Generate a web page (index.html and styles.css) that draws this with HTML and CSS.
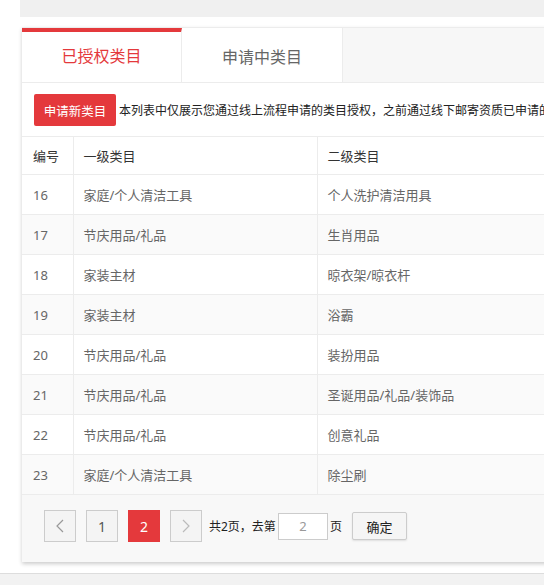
FILE: index.html
```html
<!DOCTYPE html>
<html lang="zh-CN">
<head>
<meta charset="utf-8">
<title>类目授权</title>
<link rel="stylesheet" href="styles.css">
</head>
<body>
<div class="topbar"></div>
<div class="card">
  <div class="tabs">
    <div class="tab active">已授权类目</div>
    <div class="tab">申请中类目</div>
  </div>
  <div class="toolbar">
    <button class="btn-red">申请新类目</button>
    <span class="notice">本列表中仅展示您通过线上流程申请的类目授权，之前通过线下邮寄资质已申请的</span>
  </div>
  <table class="grid">
    <colgroup><col class="c1"><col class="c2"><col class="c3"></colgroup>
    <thead>
      <tr><th>编号</th><th>一级类目</th><th>二级类目</th></tr>
    </thead>
    <tbody>
      <tr><td>16</td><td>家庭/个人清洁工具</td><td>个人洗护清洁用具</td></tr>
      <tr><td>17</td><td>节庆用品/礼品</td><td>生肖用品</td></tr>
      <tr><td>18</td><td>家装主材</td><td>晾衣架/晾衣杆</td></tr>
      <tr><td>19</td><td>家装主材</td><td>浴霸</td></tr>
      <tr><td>20</td><td>节庆用品/礼品</td><td>装扮用品</td></tr>
      <tr><td>21</td><td>节庆用品/礼品</td><td>圣诞用品/礼品/装饰品</td></tr>
      <tr><td>22</td><td>节庆用品/礼品</td><td>创意礼品</td></tr>
      <tr><td>23</td><td>家庭/个人清洁工具</td><td>除尘刷</td></tr>
    </tbody>
  </table>
  <div class="pager">
    <span class="pg arrow"><svg width="8" height="14" viewBox="0 0 8 14"><polyline points="7,1 1,7 7,13" fill="none" stroke="#999" stroke-width="1.2"/></svg></span>
    <span class="pg">1</span>
    <span class="pg current">2</span>
    <span class="pg arrow"><svg width="8" height="14" viewBox="0 0 8 14"><polyline points="1,1 7,7 1,13" fill="none" stroke="#bbb" stroke-width="1.2"/></svg></span>
    <span class="pg-text">共2页，去第</span>
    <span class="pg-input">2</span>
    <span class="pg-text unit">页</span>
    <button class="pg-ok">确定</button>
  </div>
</div>
<div class="footer"></div>
</body>
</html>
```

FILE: styles.css
```css
html, body {
  margin: 0;
  padding: 0;
  overflow: hidden;
  background: #fff;
  font-family: "Noto Sans", "Noto Sans CJK SC", sans-serif;
  color: #333;
}

.topbar {
  margin-left: 20px;
  height: 17px;
  background: #f0f0f0;
}

.card {
  margin: 10px 0 0 22px;
  width: 900px;
  background: #fff;
  box-shadow: 0 2px 4px rgba(0, 0, 0, 0.2);
}

.tabs {
  display: flex;
  height: 54px;
  background: #f7f7f7;
  border-top: 1px solid #ececec;
  border-bottom: 1px solid #ececec;
}

.tab {
  width: 160px;
  height: 54px;
  box-sizing: border-box;
  background: #fff;
  display: flex;
  align-items: center;
  justify-content: center;
  font-size: 16px;
  color: #666;
  border-right: 1px solid #ececec;
}

.tab.active {
  color: #e4393c;
  border-top: 4px solid #e4393c;
  padding-bottom: 4px;
}

.tab + .tab {
  width: 161px;
  padding-top: 2px;
}

.toolbar {
  display: flex;
  align-items: center;
  padding: 11px 12px 10px;
  white-space: nowrap;
  gap: 3px;
}

.btn-red {
  height: 32px;
  width: 82px;
  padding: 0;
  border: none;
  border-radius: 2px;
  background: #e4393c;
  color: #fff;
  font-family: inherit;
  font-size: 12.5px;
}

.notice {
  font-size: 12px;
  color: #222;
}

.grid {
  width: 100%;
  border-collapse: collapse;
  font-size: 13px;
}

.grid col.c1 { width: 51px; }
.grid col.c2 { width: 244px; }

.grid th,
.grid td {
  text-align: left;
  border: 1px solid #ececec;
  padding: 0 0 0 10px;
  font-weight: normal;
}

.grid th:first-child,
.grid td:first-child {
  border-left: none;
  padding-left: 11px;
}

.grid th {
  height: 37px;
  color: #333;
}

.grid td {
  height: 39px;
  color: #666;
}

.grid tbody tr:nth-child(even) td {
  background: #fafafa;
}

.pager {
  display: flex;
  align-items: center;
  background: #f8f8f8;
  padding: 15px 22px 20px;
  font-size: 12px;
}

.pg {
  width: 32px;
  height: 32px;
  box-sizing: border-box;
  border: 1px solid #ccc;
  background: #f4f4f4;
  display: flex;
  align-items: center;
  justify-content: center;
  margin-right: 10px;
  font-size: 14px;
  color: #555;
}

.pg.current {
  background: #e4393c;
  border-color: #e4393c;
  color: #fff;
}

.pg-text {
  color: #222;
  margin-left: -3px;
  font-size: 12px;
  margin-right: 2px;
}

.pg-text.unit {
  margin-left: 2px;
}

.pg-input {
  width: 50px;
  height: 27px;
  box-sizing: border-box;
  border: 1px solid #ccc;
  background: #fff;
  display: flex;
  align-items: center;
  justify-content: center;
  color: #999;
  font-size: 13px;
}

.pg-ok {
  margin-left: 8px;
  width: 55px;
  height: 28px;
  border: 1px solid #ccc;
  border-radius: 2px;
  background: #f5f5f5;
  box-shadow: 0 1px 2px rgba(0, 0, 0, 0.1);
  font-family: inherit;
  font-size: 13px;
  color: #222;
  padding: 0;
}

.footer {
  margin-top: 11px;
  border-top: 1px solid #ddd;
  background: #f2f2f2;
  height: 40px;
}
```
